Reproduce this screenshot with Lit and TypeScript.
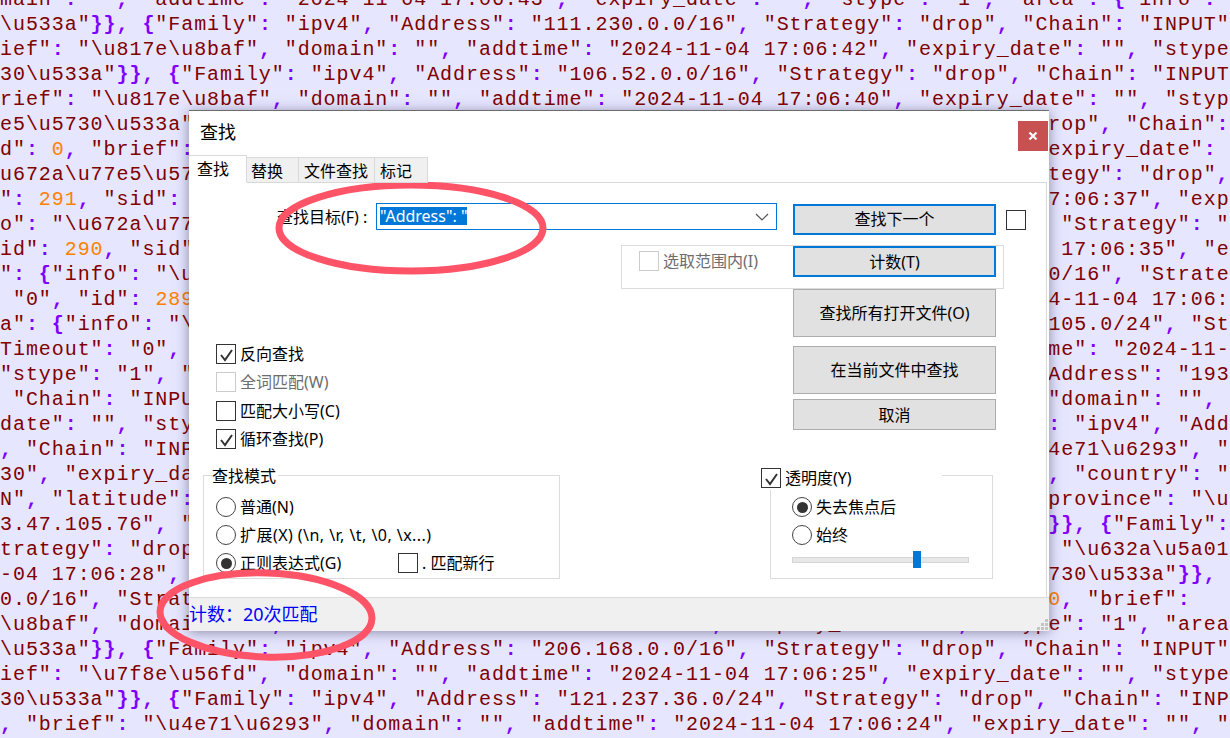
import { LitElement, html, css, svg } from "lit";
import { customElement } from "lit/decorators.js";

type Seg = [string, string];
// [text, initial state]  s = starts inside a string, o = starts outside
const rows: Array<[string, string, string?, string?]> = [
  ['main": "", "addtime": "2024-11-04 17:06:43", "expiry_date": "", "stype": "1", "area": {"info": "', "s"],
  ['\\u533a"}}, {"Family": "ipv4", "Address": "111.230.0.0/16", "Strategy": "drop", "Chain": "INPUT", ', "s"],
  ['ief": "\\u817e\\u8baf", "domain": "", "addtime": "2024-11-04 17:06:42", "expiry_date": "", "stype": ', "s"],
  ['30\\u533a"}}, {"Family": "ipv4", "Address": "106.52.0.0/16", "Strategy": "drop", "Chain": "INPUT", ', "s"],
  ['rief": "\\u817e\\u8baf", "domain": "", "addtime": "2024-11-04 17:06:40", "expiry_date": "", "stype": ', "s"],
  ['e5\\u5730\\u533a"', "s", 'rop", "Chain": "INPUT', "s"],
  ['d": 0, "brief": ', "s", 'expiry_date": "", "stype', "s"],
  ['u672a\\u77e5\\u57', "s", 'tegy": "drop", ', "s"],
  ['": 291, "sid": ', "s", '7:06:37", "expiry', "s"],
  ['o": "\\u672a\\u77', "s", ' "Strategy": "', "o"],
  ['id": 290, "sid"', "s", ' 17:06:35", "expiry', "s"],
  ['": {"info": "\\u', "s", '0/16", "Strategy', "s"],
  [' "0", "id": 289', "o", '4-11-04 17:06:36', "s"],
  ['a": {"info": "\\', "s", '105.0/24", "Strategy', "s"],
  ['Timeout": "0", ', "s", 'me": "2024-11-04', "s"],
  ['"stype": "1", "', "o", 'Address": "193.', "s"],
  [' "Chain": "INPU', "o", '"domain": "", ', "o"],
  ['date": "", "sty', "s", ': "ipv4", "Address', "o"],
  [', "Chain": "INP', "o", '4e71\\u6293", "', "s"],
  ['30", "expiry_da', "s", ', "country": "', "o"],
  ['N", "latitude":', "s", 'province": "\\u', "s"],
  ['3.47.105.76", "', "s", '}}, {"Family":', "o"],
  ['trategy": "drop', "s", ' "\\u632a\\u5a01', "o"],
  ['-04 17:06:28", ', "s", '730\\u533a"}}, ', "s"],
  ['0.0/16", "Strat', "s", '0, "brief":', "o"],
  ['\\u8baf", "domain": "", "addtime": "2024-11-04 17:06:26", "expiry_date": "", "stype": "1", "area": ', "s"],
  ['\\u533a"}}, {"Family": "ipv4", "Address": "206.168.0.0/16", "Strategy": "drop", "Chain": "INPUT", ', "s"],
  ['ief": "\\u7f8e\\u56fd", "domain": "", "addtime": "2024-11-04 17:06:25", "expiry_date": "", "stype": ', "s"],
  ['30\\u533a"}}, {"Family": "ipv4", "Address": "121.237.36.0/24", "Strategy": "drop", "Chain": "INPUT', "s"],
  [', "brief": "\\u4e71\\u6293", "domain": "", "addtime": "2024-11-04 17:06:24", "expiry_date": "", "stype', "o"],
];

function tokenize(text: string, state: string): Seg[] {
  const out: Seg[] = [];
  let inStr = state === "s";
  let buf = "";
  let kind = inStr ? "str" : "";
  const flush = () => {
    if (buf) out.push([buf, kind]);
    buf = "";
  };
  for (const ch of text) {
    if (inStr) {
      if (kind !== "str") { flush(); kind = "str"; }
      buf += ch;
      if (ch === '"') { flush(); inStr = false; kind = ""; }
    } else if (ch === '"') {
      flush(); kind = "str"; buf = ch; inStr = true;
    } else {
      const k = /[0-9]/.test(ch) ? "num" : /[{}:,\[\]]/.test(ch) ? "pun" : "";
      if (k !== kind) { flush(); kind = k; }
      buf += ch;
    }
  }
  flush();
  return out;
}

const checkMark = svg`<polyline points="4,10 8,15 15,5" fill="none" stroke="#333" stroke-width="2"></polyline>`;

@customElement("app-root")
export class AppRoot extends LitElement {
  static styles = css`
    :host { display: block; position: relative; width: 1230px; height: 738px; overflow: hidden; background: #e6e6ff; }
    * { box-sizing: border-box; }
    .code { margin-top: -13px; font: 20px/25px "Liberation Mono", monospace; letter-spacing: 0.94px; color: #000; }
    .line { height: 25px; white-space: pre; }
    .str { color: #800000; }
    .pun { color: #8000ff; font-weight: bold; }
    .num { color: #ff8000; }

    .dialog { position: absolute; left: 189px; top: 110px; width: 860px; height: 520px; display: flex; flex-direction: column; background: #fff; border-top: 1px solid #6b6b6b; box-shadow: 0 2px 12px rgba(40,40,70,.5); font: 16px/20px "Noto Sans", "Noto Sans CJK SC", sans-serif; color: #000; }
    .titlebar { height: 44px; flex: none; display: flex; justify-content: space-between; padding: 9px 1px 0 11px; font-size: 18px; line-height: 24px; }
    .close { width: 30px; height: 30px; margin-top: 1px; background: #c75050; color: #fff; display: flex; align-items: center; justify-content: center; }
    .tabs { height: 28px; flex: none; display: flex; align-items: flex-end; margin-bottom: -1px; position: relative; z-index: 2; }
    .tab { height: 26px; background: #f0f0f0; border: 1px solid #d9d9d9; border-left: none; padding-left: 3px; line-height: 26px; }
    .tab.active { height: 28px; background: #fff; border-bottom-color: #fff; border-left: none; padding-left: 8px; width: 58px; line-height: 26px; }
    .t2 { width: 52px; padding-left: 4px; }
    .t3 { width: 76px; padding-left: 5px; }
    .t4 { width: 53px; padding-left: 5px; }

    .panel { position: relative; height: 415px; flex: none; margin-right: 2px; border-top: 1px solid #d9d9d9; border-right: 1px solid #d9d9d9; display: grid; grid-template-columns: 604px 1fr; grid-template-rows: 292px 104px; }
    .search { display: flex; margin-top: 20px; height: 27px; padding-left: 88px; }
    .search label { width: 99px; line-height: 29px; white-space: pre; }
    .combo { position: relative; width: 401px; height: 27px; border: 1px solid #0078d7; padding: 3px; }
    .sel { display: block; height: 18px; line-height: 18px; background: #0078d7; color: #fff; width: 87px; white-space: pre; overflow: hidden; }
    .combo svg { position: absolute; right: 7px; top: 9px; }
    .checks { margin-top: 114px; padding-left: 27px; display: flex; flex-direction: column; gap: 8.3px; }
    .row { display: flex; align-items: flex-start; gap: 4px; height: 20px; line-height: 20px; white-space: pre; }
    .box { width: 20px; height: 20px; flex: none; border: 1px solid #333; background: #fff; }
    .box svg { display: block; margin: 0; }
    .box.off { border-color: #ccc; }
    .dim { color: #6d6d6d; }
    .radio { width: 20px; height: 20px; flex: none; border-radius: 50%; border: 1px solid #444; display: flex; align-items: center; justify-content: center; background: #fff; }
    .radio.on::after { content: ""; width: 11px; height: 11px; border-radius: 50%; background: #333; }
    .wide { letter-spacing: 0.45px; }

    .actions { position: relative; z-index: 1; padding-top: 21px; display: flex; flex-direction: column; }
    .first { display: flex; gap: 10px; align-items: center; }
    .btn { width: 203px; flex: none; background: #e1e1e1; border: 1px solid #adadad; display: flex; align-items: center; justify-content: center; }
    .btn.primary { height: 31px; border: 2px solid #0078d7; }
    .btn.next { padding-bottom: 2px; }
    .btn.count { margin-top: 11px; }
    .btn.open { margin-top: 12px; height: 48px; }
    .btn.cur { margin-top: 9px; height: 48px; }
    .btn.cancel { margin-top: 5px; height: 31px; }

    .range { position: absolute; left: 432px; top: 62px; width: 383px; height: 44px; border: 1px solid #dcdcdc; padding: 5px 0 0 17px; }

    .bottom { grid-column: 1 / span 2; display: flex; gap: 210px; padding-left: 14px; }
    .group { position: relative; height: 104px; border: 1px solid #dcdcdc; display: flex; flex-direction: column; gap: 8px; }
    .g1 { width: 357px; padding: 21px 0 0 12px; }
    .g2 { width: 223px; padding: 21px 0 0 21px; }
    .legend { position: absolute; background: #fff; }
    .g1 .legend { left: 8px; top: -9px; width: 66px; height: 20px; line-height: 18px; }
    .g2 .legend { left: -10px; top: -8px; width: 181px; height: 22px; padding-top: 0; }
    .mlabel { width: 154px; }
    .slider { position: relative; width: 177px; height: 17px; margin-top: -2px; display: flex; align-items: center; }
    .track { width: 100%; height: 6px; background: #e7e7e7; border: 1px solid #d6d6d6; }
    .thumb { position: absolute; left: 121px; top: 0; width: 8px; height: 17px; background: #0078d7; }

    .status { flex: 1; border-top: 1px solid #dcdcdc; background: #f0f0f0; color: #0000ff; font-size: 18px; line-height: 33px; position: relative; }
    .grip { position: absolute; right: 0; bottom: 0; }
    .marks { position: absolute; left: 0; top: 0; pointer-events: none; }
  `;

  private seg(text: string, state: string) {
    return tokenize(text, state).map(([t, k]) => html`<span class=${k}>${t}</span>`);
  }

  render() {
    return html`
      <div class="code">
        ${rows.map(
          ([l, ls, r, rs]) => html`<div class="line">${
            r === undefined
              ? this.seg(l, ls)
              : html`${this.seg(l.padEnd(81), ls)}${this.seg(r, rs as string)}`
          }</div>`
        )}
      </div>

      <div class="dialog">
        <div class="titlebar">
          <span>查找</span>
          <div class="close">
            <svg width="10" height="10" viewBox="0 0 10 10"><path d="M1.5 1.5 8.5 8.5M8.5 1.5 1.5 8.5" stroke="#fff" stroke-width="2.2"></path></svg>
          </div>
        </div>
        <div class="tabs">
          <div class="tab active">查找</div>
          <div class="tab t2">替换</div>
          <div class="tab t3">文件查找</div>
          <div class="tab t4">标记</div>
        </div>
        <div class="panel">
          <div class="range">
            <div class="row dim"><span class="box off"></span>选取范围内(I)</div>
          </div>
          <div class="left">
            <div class="search">
              <label>查找目标(F) :</label>
              <div class="combo">
                <span class="sel">"Address": "</span>
                <svg width="14" height="8" viewBox="0 0 14 8"><polyline points="1,1 7,7 13,1" fill="none" stroke="#555" stroke-width="1.2"></polyline></svg>
              </div>
            </div>
            <div class="checks">
              <div class="row"><span class="box"><svg width="18" height="18" viewBox="0 0 18 18">${checkMark}</svg></span>反向查找</div>
              <div class="row dim"><span class="box off"></span>全词匹配(W)</div>
              <div class="row"><span class="box"></span>匹配大小写(C)</div>
              <div class="row"><span class="box"><svg width="18" height="18" viewBox="0 0 18 18">${checkMark}</svg></span>循环查找(P)</div>
            </div>
          </div>
          <div class="actions">
            <div class="first">
              <div class="btn primary next">查找下一个</div>
              <span class="box"></span>
            </div>
            <div class="btn primary count">计数(T)</div>
            <div class="btn open">查找所有打开文件(O)</div>
            <div class="btn cur">在当前文件中查找</div>
            <div class="btn cancel">取消</div>
          </div>
          <div class="bottom">
            <div class="group g1">
              <div class="legend">查找模式</div>
              <div class="row"><span class="radio"></span>普通(N)</div>
              <div class="row"><span class="radio"></span><span class="wide">扩展(X) (\\n, \\r, \\t, \\0, \\x...)</span></div>
              <div class="row"><span class="radio on"></span><span class="mlabel">正则表达式(G)</span><span class="box"></span>. 匹配新行</div>
            </div>
            <div class="group g2">
              <div class="legend"><div class="row"><span class="box"><svg width="18" height="18" viewBox="0 0 18 18">${checkMark}</svg></span>透明度(Y)</div></div>
              <div class="row"><span class="radio on"></span>失去焦点后</div>
              <div class="row"><span class="radio"></span>始终</div>
              <div class="slider"><div class="track"></div><div class="thumb"></div></div>
            </div>
          </div>
        </div>
        <div class="status">
          计数：20次匹配
          <svg class="grip" width="13" height="13" viewBox="0 0 13 13" fill="#c4c4c4">
            <rect x="9" y="1" width="3" height="3"></rect>
            <rect x="5" y="5" width="3" height="3"></rect><rect x="9" y="5" width="3" height="3"></rect>
            <rect x="1" y="9" width="3" height="3"></rect><rect x="5" y="9" width="3" height="3"></rect><rect x="9" y="9" width="3" height="3"></rect>
          </svg>
        </div>
      </div>

      <svg class="marks" width="1230" height="738" viewBox="0 0 1230 738" fill="none" stroke="#ff5468" stroke-width="7">
        <ellipse cx="411" cy="228" rx="132" ry="43"></ellipse>
        <ellipse cx="266" cy="615" rx="106" ry="42" transform="rotate(2 266 615)"></ellipse>
      </svg>
    `;
  }
}
